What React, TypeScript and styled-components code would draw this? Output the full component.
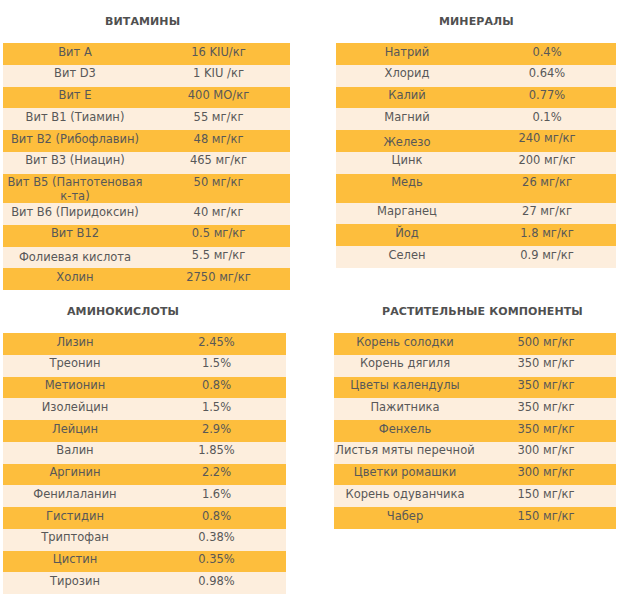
import React from 'react';
import styled, { createGlobalStyle } from 'styled-components';

const GlobalStyle = createGlobalStyle`
  html, body {
    margin: 0;
    padding: 0;
    background: #ffffff;
  }
  body {
    font-family: 'DejaVu Sans', Verdana, sans-serif;
    color: #5a5a5a;
  }
`;

type Item = {
  name: string;
  value: string;
  tall?: boolean;
  nameDrop?: number;
  valueDrop?: number;
};

type Section = {
  title: string;
  indent: number;
  width: number;
  inset: number;
  nameCol: number;
  items: Item[];
};

const vitamins: Section = {
  title: 'ВИТАМИНЫ',
  indent: 102,
  width: 287,
  inset: 0,
  nameCol: 144,
  items: [
    { name: 'Вит А', value: '16 KIU/кг' },
    { name: 'Вит D3', value: '1 KIU /кг' },
    { name: 'Вит E', value: '400 МО/кг' },
    { name: 'Вит B1 (Тиамин)', value: '55 мг/кг' },
    { name: 'Вит B2 (Рибофлавин)', value: '48 мг/кг' },
    { name: 'Вит B3 (Ниацин)', value: '465 мг/кг' },
    { name: 'Вит B5 (Пантотеновая к-та)', value: '50 мг/кг' },
    { name: 'Вит B6 (Пиридоксин)', value: '40 мг/кг' },
    { name: 'Вит B12', value: '0.5 мг/кг' },
    { name: 'Фолиевая кислота', value: '5.5 мг/кг', nameDrop: 1.5 },
    { name: 'Холин', value: '2750 мг/кг' },
  ],
};

const minerals: Section = {
  title: 'МИНЕРАЛЫ',
  indent: 105,
  width: 280,
  inset: 2,
  nameCol: 142,
  items: [
    { name: 'Натрий', value: '0.4%' },
    { name: 'Хлорид', value: '0.64%' },
    { name: 'Калий', value: '0.77%' },
    { name: 'Магний', value: '0.1%' },
    { name: 'Железо', value: '240 мг/кг', nameDrop: 3.5, valueDrop: -1 },
    { name: 'Цинк', value: '200 мг/кг' },
    { name: 'Медь', value: '26 мг/кг', tall: true },
    { name: 'Марганец', value: '27 мг/кг' },
    { name: 'Йод', value: '1.8 мг/кг' },
    { name: 'Селен', value: '0.9 мг/кг' },
  ],
};

const aminoAcids: Section = {
  title: 'АМИНОКИСЛОТЫ',
  indent: 64,
  width: 283,
  inset: 0,
  nameCol: 144,
  items: [
    { name: 'Лизин', value: '2.45%' },
    { name: 'Треонин', value: '1.5%' },
    { name: 'Метионин', value: '0.8%' },
    { name: 'Изолейцин', value: '1.5%' },
    { name: 'Лейцин', value: '2.9%' },
    { name: 'Валин', value: '1.85%' },
    { name: 'Аргинин', value: '2.2%' },
    { name: 'Фенилаланин', value: '1.6%' },
    { name: 'Гистидин', value: '0.8%' },
    { name: 'Триптофан', value: '0.38%' },
    { name: 'Цистин', value: '0.35%' },
    { name: 'Тирозин', value: '0.98%' },
  ],
};

const plants: Section = {
  title: 'РАСТИТЕЛЬНЫЕ КОМПОНЕНТЫ',
  indent: 48,
  width: 282,
  inset: 0,
  nameCol: 142,
  items: [
    { name: 'Корень солодки', value: '500 мг/кг' },
    { name: 'Корень дягиля', value: '350 мг/кг' },
    { name: 'Цветы календулы', value: '350 мг/кг' },
    { name: 'Пажитника', value: '350 мг/кг' },
    { name: 'Фенхель', value: '350 мг/кг' },
    { name: 'Листья мяты перечной', value: '300 мг/кг' },
    { name: 'Цветки ромашки', value: '300 мг/кг' },
    { name: 'Корень одуванчика', value: '150 мг/кг' },
    { name: 'Чабер', value: '150 мг/кг' },
  ],
};

const SectionBlock = ({ section }: { section: Section }) => (
  <Block>
    <Title $indent={section.indent}>{section.title}</Title>
    <Table $width={section.width} $inset={section.inset}>
      {section.items.map((item, i) => (
        <Row
          key={item.name}
          $shaded={i % 2 === 0}
          $tall={!!item.tall}
          $nameCol={section.nameCol}
        >
          <Cell $drop={item.nameDrop || 0}>{item.name}</Cell>
          <Cell $drop={item.valueDrop || 0}>{item.value}</Cell>
        </Row>
      ))}
    </Table>
  </Block>
);

const App = () => (
  <>
    <GlobalStyle />
    <Page>
      <SectionBlock section={vitamins} />
      <SectionBlock section={minerals} />
      <SectionBlock section={aminoAcids} />
      <SectionBlock section={plants} />
    </Page>
  </>
);

export default App;

const Page = styled.div`
  display: grid;
  grid-template-columns: 287px 282px;
  column-gap: 44px;
  align-items: start;
  padding: 0 3px;
  width: 619px;
  box-sizing: border-box;
`;

const Block = styled.section`
  padding-top: 15px;
`;

const Title = styled.h2<{ $indent: number }>`
  margin: 0 0 14px;
  padding-left: ${({ $indent }) => $indent}px;
  font-size: 11px;
  line-height: 14px;
  font-weight: bold;
  color: #505050;
  letter-spacing: 0.1px;
  white-space: nowrap;
`;

const Table = styled.div<{ $width: number; $inset: number }>`
  width: ${({ $width }) => $width}px;
  margin-left: ${({ $inset }) => $inset}px;
  display: flex;
  flex-direction: column;
`;

const Row = styled.div<{ $shaded: boolean; $tall: boolean; $nameCol: number }>`
  display: grid;
  grid-template-columns: ${({ $nameCol }) => $nameCol}px 1fr;
  align-items: start;
  min-height: ${({ $tall }) => ($tall ? 29 : 21.75)}px;
  box-sizing: border-box;
  padding-top: 1.5px;
  background: ${({ $shaded }) => ($shaded ? '#fdbe3d' : '#fdeedd')};
`;

const Cell = styled.div<{ $drop: number }>`
  font-size: 11.5px;
  line-height: 14px;
  text-align: center;
  color: #585858;
  position: relative;
  top: ${({ $drop }) => $drop}px;
`;
